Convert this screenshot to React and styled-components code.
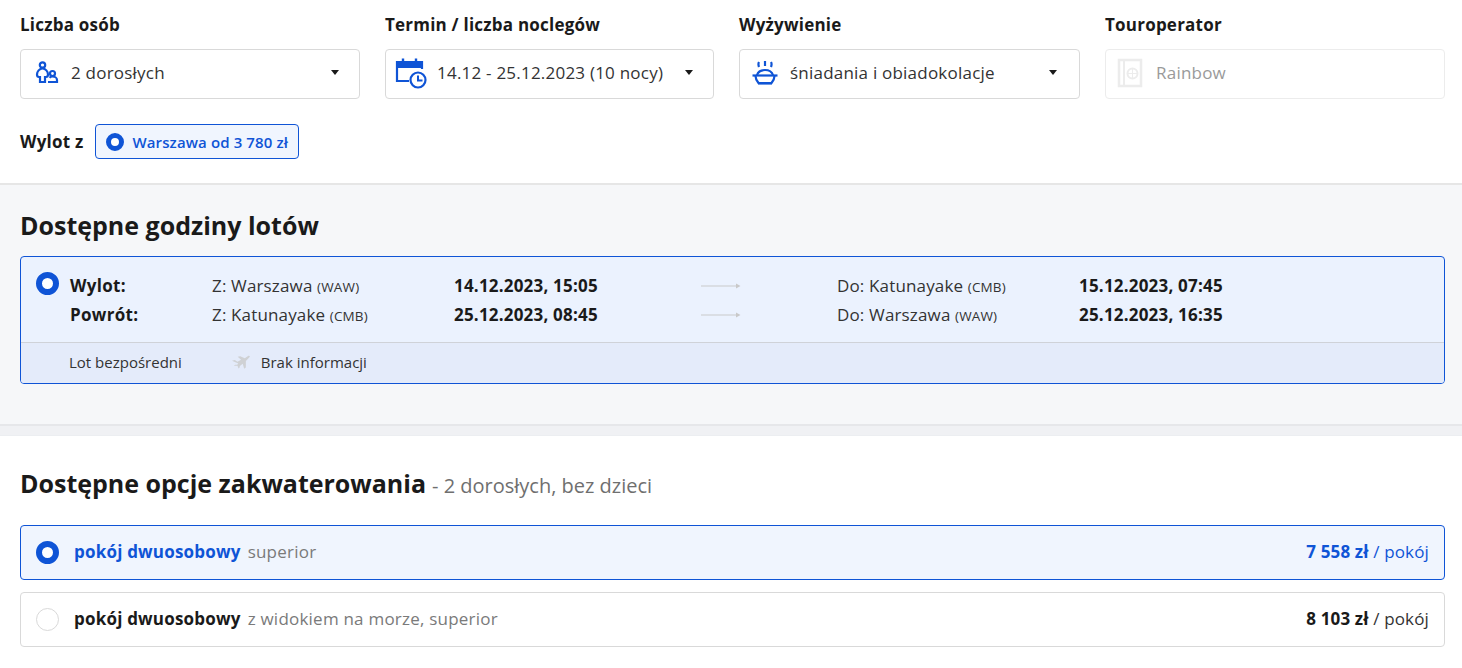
import React from "react";
import styled, { createGlobalStyle } from "styled-components";

const BLUE = "#0f54d6";

const GlobalStyle = createGlobalStyle`
  html, body { margin: 0; padding: 0; background: #fff; }
  * { box-sizing: border-box; }
  body {
    font-family: "Open Sans", "Liberation Sans", sans-serif;
    color: #1a1a1a;
  }
`;

const Page = styled.div`
  width: 1462px;
  height: 668px;
  overflow: hidden;
  background: #fff;
`;

const FilterSection = styled.section`
  height: 185px;
  padding: 14px 17px 0 20px;
  border-bottom: 2px solid #e6e6e6;
`;

const FilterGrid = styled.div`
  display: grid;
  grid-template-columns: 340px 329px 341px 340px;
  column-gap: 25px;
`;

const FilterField = styled.div`
  display: flex;
  flex-direction: column;
`;

const FieldLabel = styled.div`
  height: 22px;
  margin-bottom: 13px;
  font-size: 17px;
  line-height: 22px;
  font-weight: 700;
  letter-spacing: 0.22px;
`;

const SelectBox = styled.div`
  display: flex;
  align-items: center;
  height: 50px;
  padding: 0 ${(p) => p.$padRight || 20}px 3px ${(p) => p.$padLeft || 11}px;
  border: 1px solid ${(p) => (p.$disabled ? "#ececec" : "#d9d9d9")};
  border-radius: 4px;
  font-size: 17px;
  letter-spacing: 0.22px;
  color: ${(p) => (p.$disabled ? "#9a9a9a" : "#333")};
`;

const SelectIcon = styled.span`
  display: flex;
  width: ${(p) => p.$w || 32}px;
  height: 32px;
  margin-right: ${(p) => p.$gap || 8}px;
  align-items: center;
  justify-content: center;
  flex: none;
`;

const SelectValue = styled.span`
  flex: 1;
  white-space: nowrap;
`;

const Caret = styled.span`
  width: 0;
  height: 0;
  flex: none;
  border-left: 4.5px solid transparent;
  border-right: 4.5px solid transparent;
  border-top: 5px solid #1a1a1a;
`;

const DepartureRow = styled.div`
  display: flex;
  align-items: center;
  margin-top: 25px;
`;

const DepartureLabel = styled.span`
  margin-right: 12px;
  font-size: 17px;
  font-weight: 700;
  letter-spacing: 0.22px;
`;

const DeparturePill = styled.div`
  display: flex;
  align-items: center;
  height: 35px;
  padding: 0 10px;
  background: #f0f5fe;
  border: 1px solid ${BLUE};
  border-radius: 4px;
  font-size: 15px;
  font-weight: 600;
  letter-spacing: 0.12px;
  color: ${BLUE};
`;

const Radio = styled.span`
  display: block;
  flex: none;
  width: ${(p) => p.$size || 23}px;
  height: ${(p) => p.$size || 23}px;
  border-radius: 50%;
  background: #fff;
  border: ${(p) =>
    p.$on ? `${p.$ring || 6}px solid ${BLUE}` : "1px solid #d9d9d9"};
`;

const PillRadio = styled(Radio)`
  margin-right: 8px;
`;

const FlightSection = styled.section`
  height: 239px;
  padding: 25px 17px 0 20px;
  background: #f6f7f9;
`;

const SectionTitle = styled.h2`
  margin: 0;
  font-size: 25px;
  line-height: 30px;
  font-weight: 700;
  color: #1a1a1a;
`;

const FlightCard = styled.div`
  margin-top: 16px;
  height: 128px;
  background: #ebf2fe;
  border: 1px solid ${BLUE};
  border-radius: 4px;
  overflow: hidden;
`;

const FlightMain = styled.div`
  position: relative;
  height: 86px;
  padding: 14px 0 0 49px;
  border-bottom: 1px solid #cfd2d8;
`;

const FlightRadio = styled(Radio)`
  position: absolute;
  left: 15px;
  top: 15px;
`;

const FlightRow = styled.div`
  display: grid;
  grid-template-columns: 142px 242px 247px 136px 242px 1fr;
  align-items: center;
  height: 29px;
  font-size: 17px;
  white-space: nowrap;
`;

const FlightLabel = styled.span`
  font-weight: 700;
  letter-spacing: 0.3px;
`;

const FlightTime = styled.span`
  font-weight: 700;
  letter-spacing: 0.2px;
`;

const FlightPlace = styled.span`
  color: #333;
  letter-spacing: 0.15px;
`;

const Code = styled.small`
  font-size: 13.5px;
  color: #333;
`;

const ArrowIcon = styled.svg`
  display: block;
  width: 40px;
  height: 6px;
`;

const FlightFooter = styled.div`
  display: flex;
  align-items: center;
  height: 40px;
  padding: 0 0 2px 48px;
  background: #e4ebfa;
  font-size: 15px;
  color: #333;
`;

const FooterItem = styled.span`
  display: flex;
  align-items: center;
  margin-right: ${(p) => p.$gap || 0}px;
`;

const PlaneIcon = styled.svg`
  width: 20px;
  height: 16px;
  margin-right: 9px;
`;

const Band = styled.div`
  height: 12px;
  background: #f0f1f4;
  border-top: 2px solid #e6e7ea;
  border-bottom: 1px solid #eceef1;
`;

const RoomSection = styled.section`
  padding: 32px 17px 0 20px;
`;

const RoomTitleRow = styled.div`
  display: flex;
  align-items: baseline;
  margin-bottom: 26px;
`;

const RoomNote = styled.span`
  margin-left: 6px;
  font-size: 20px;
  color: #6f6f6f;
`;

const RoomRow = styled.div`
  display: flex;
  align-items: center;
  height: 55px;
  margin-bottom: 12px;
  padding: 0 15px 2px;
  background: ${(p) => (p.$on ? "#f0f5fe" : "#fff")};
  border: 1px solid ${(p) => (p.$on ? BLUE : "#d9d9d9")};
  border-radius: 4px;
  font-size: 17px;
`;

const RoomRadio = styled(Radio)`
  margin-top: 2px;
`;

const RoomName = styled.span`
  margin-left: 15px;
  font-weight: 700;
  letter-spacing: 0.2px;
  color: ${(p) => (p.$on ? BLUE : "#1a1a1a")};
`;

const RoomExtra = styled.span`
  margin-left: 7px;
  flex: 1;
  letter-spacing: 0.22px;
  color: #7a7a7a;
`;

const RoomPrice = styled.span`
  letter-spacing: 0.15px;
  color: ${(p) => (p.$on ? BLUE : "#333")};
  b {
    font-weight: 700;
    color: ${(p) => (p.$on ? BLUE : "#1a1a1a")};
  }
`;

const PeopleIcon = () => (
  <svg width="26" height="26" viewBox="0 0 26 26" fill="none" stroke={BLUE} strokeWidth="2.2">
    <circle cx="9.5" cy="5" r="2.7" />
    <path d="M9.5 8.500c-3 0-5.500 3-5.500 6 0 1.500.6 2.500 2 2.500h1v5h5v-5h1c1.400 0 2-1 2-2.500 0-3-2.500-6-5.500-6z" />
    <circle cx="19.500" cy="13.500" r="2.500" />
    <path d="M15 22h9v-2c0-2-2-3.500-4.500-3.500-1.200 0-2.300.4-3 1.200" />
  </svg>
);

const CalendarIcon = () => (
  <svg width="32" height="32" viewBox="0 0 32 32" fill="none" stroke={BLUE}>
    <path d="M14 24H2V5h25v7" strokeWidth="2.200" />
    <path d="M2 5h25v6H2z" fill={BLUE} stroke="none" />
    <path d="M8 1.500V6M21 1.500V6" strokeWidth="2.400" />
    <circle cx="23" cy="23" r="7.500" strokeWidth="2.200" fill="#fff" />
    <path d="M23 18.500v5h4.500" strokeWidth="2" />
  </svg>
);

const MealIcon = () => (
  <svg width="28" height="30" viewBox="0 0 28 30" fill="none" stroke={BLUE} strokeWidth="2.200">
    <path d="M8 4c-.8 1.500-.8 3 0 5M14 3v5M20 4c.8 1.500.8 3 0 5" />
    <path d="M6 17c1-3 4-5 8-5s7 2 8 5" />
    <path d="M1.500 17.500h25" />
    <path d="M4.500 18c0 2.500 1 4.500 3 7h13c2-2.500 3-4.500 3-7" />
    <path d="M7 25.500h14" />
  </svg>
);

const OperatorIcon = () => (
  <svg width="26" height="30" viewBox="0 0 26 30" fill="none" stroke="#ececec" strokeWidth="2.500">
    <path d="M2 2h22v26H2z" />
    <path d="M7 2v26" strokeWidth="2" />
    <circle cx="15.500" cy="15.500" r="5" strokeWidth="2" />
    <path d="M10.500 15.500h10M15.500 10.500v10" strokeWidth="1" />
  </svg>
);

const Arrow = () => (
  <ArrowIcon viewBox="0 0 40 6">
    <path d="M0 2.500h35V3.500H0z" fill="#c9c9c9" />
    <path d="M35 .5 39.500 3 35 5.500z" fill="#c9c9c9" />
  </ArrowIcon>
);

const flights = [
  { label: "Wylot:", from: "Warszawa", fromCode: "(WAW)", out: "14.12.2023, 15:05", to: "Katunayake", toCode: "(CMB)", arrive: "15.12.2023, 07:45" },
  { label: "Powrót:", from: "Katunayake", fromCode: "(CMB)", out: "25.12.2023, 08:45", to: "Warszawa", toCode: "(WAW)", arrive: "25.12.2023, 16:35" },
];

const rooms = [
  { on: true, extra: "superior", price: "7 558 zł" },
  { on: false, extra: "z widokiem na morze, superior", price: "8 103 zł" },
];

export default function App() {
  return (
    <Page>
      <GlobalStyle />
      <FilterSection>
        <FilterGrid>
          <FilterField>
            <FieldLabel>Liczba osób</FieldLabel>
            <SelectBox>
              <SelectIcon $w={28} $gap={11}><PeopleIcon /></SelectIcon>
              <SelectValue>2 dorosłych</SelectValue>
              <Caret />
            </SelectBox>
          </FilterField>
          <FilterField>
            <FieldLabel>Termin / liczba noclegów</FieldLabel>
            <SelectBox $padLeft={9}>
              <SelectIcon $w={32} $gap={10}><CalendarIcon /></SelectIcon>
              <SelectValue>14.12 - 25.12.2023 (10 nocy)</SelectValue>
              <Caret />
            </SelectBox>
          </FilterField>
          <FilterField>
            <FieldLabel>Wyżywienie</FieldLabel>
            <SelectBox $padLeft={11} $padRight={22}>
              <SelectIcon $w={28} $gap={11}><MealIcon /></SelectIcon>
              <SelectValue>śniadania i obiadokolacje</SelectValue>
              <Caret />
            </SelectBox>
          </FilterField>
          <FilterField>
            <FieldLabel>Touroperator</FieldLabel>
            <SelectBox $disabled>
              <SelectIcon $w={26} $gap={13}><OperatorIcon /></SelectIcon>
              <SelectValue>Rainbow</SelectValue>
            </SelectBox>
          </FilterField>
        </FilterGrid>
        <DepartureRow>
          <DepartureLabel>Wylot z</DepartureLabel>
          <DeparturePill>
            <PillRadio $on $size={18} $ring={5} />
            Warszawa od 3 780 zł
          </DeparturePill>
        </DepartureRow>
      </FilterSection>

      <FlightSection>
        <SectionTitle>Dostępne godziny lotów</SectionTitle>
        <FlightCard>
          <FlightMain>
            <FlightRadio $on />
            {flights.map((f) => (
              <FlightRow key={f.label}>
                <FlightLabel>{f.label}</FlightLabel>
                <FlightPlace>Z: {f.from} <Code>{f.fromCode}</Code></FlightPlace>
                <FlightTime>{f.out}</FlightTime>
                <Arrow />
                <FlightPlace>Do: {f.to} <Code>{f.toCode}</Code></FlightPlace>
                <FlightTime>{f.arrive}</FlightTime>
              </FlightRow>
            ))}
          </FlightMain>
          <FlightFooter>
            <FooterItem $gap={50}>Lot bezpośredni</FooterItem>
            <FooterItem>
              <PlaneIcon viewBox="0 0 20 16">
                <g transform="rotate(-22 10 8)">
                  <path d="M1 3l3 .5 2 2.500 4-.5L8 1.500l2.500.5L14 5.500l3.500-.8c1.500-.2 2.500.8 1.500 1.500l-5 2.300L11.500 14.500 9.500 15l.5-5-3.500 1-1 1.500-1.200.2.200-3L1 8.500l1.500-.5 2 .8L6 8 1 3z" fill="#cfd1d4" />
                </g>
              </PlaneIcon>
              Brak informacji
            </FooterItem>
          </FlightFooter>
        </FlightCard>
      </FlightSection>

      <Band />

      <RoomSection>
        <RoomTitleRow>
          <SectionTitle>Dostępne opcje zakwaterowania</SectionTitle>
          <RoomNote>- 2 dorosłych, bez dzieci</RoomNote>
        </RoomTitleRow>
        {rooms.map((r) => (
          <RoomRow key={r.price} $on={r.on}>
            <RoomRadio $on={r.on} />
            <RoomName $on={r.on}>pokój dwuosobowy</RoomName>
            <RoomExtra>{r.extra}</RoomExtra>
            <RoomPrice $on={r.on}><b>{r.price}</b> / pokój</RoomPrice>
          </RoomRow>
        ))}
      </RoomSection>
    </Page>
  );
}
